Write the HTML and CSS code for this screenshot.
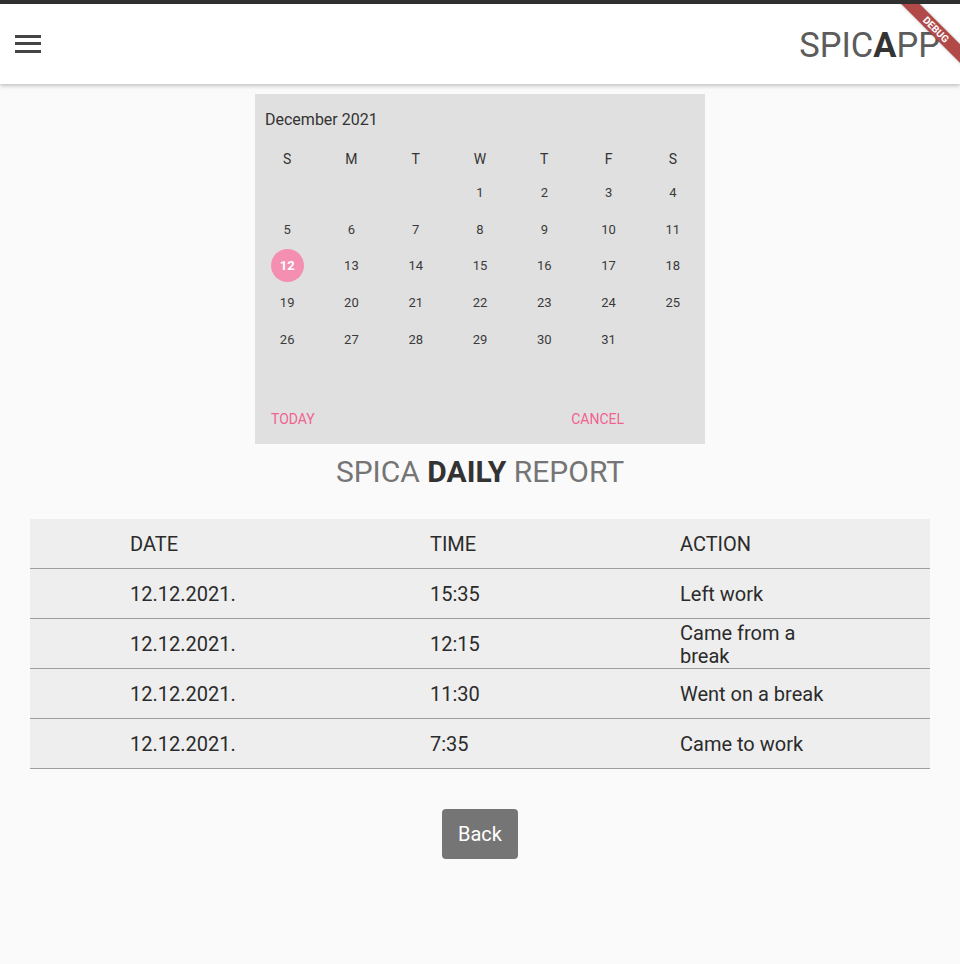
FILE: index.html
```html
<!DOCTYPE html>
<html>
<head>
<meta charset="utf-8">
<link rel="stylesheet" href="styles.css">
</head>
<body>
<div class="status"></div>
<header class="appbar">
  <div class="menu" aria-label="menu">
    <span></span><span></span><span></span>
  </div>
  <div class="brand">SPIC<b>A</b>PP</div>
  <div class="banner-wrap"><div class="banner">DEBUG</div></div>
</header>
<main class="content">
  <section class="calendar">
    <div class="month">December 2021</div>
    <div class="grid weekdays">
      <span>S</span><span>M</span><span>T</span><span>W</span><span>T</span><span>F</span><span>S</span>
    </div>
    <div class="grid days">
      <span></span><span></span><span></span><span>1</span><span>2</span><span>3</span><span>4</span>
      <span>5</span><span>6</span><span>7</span><span>8</span><span>9</span><span>10</span><span>11</span>
      <span class="sel"><i>12</i></span><span>13</span><span>14</span><span>15</span><span>16</span><span>17</span><span>18</span>
      <span>19</span><span>20</span><span>21</span><span>22</span><span>23</span><span>24</span><span>25</span>
      <span>26</span><span>27</span><span>28</span><span>29</span><span>30</span><span>31</span><span></span>
      <span></span><span></span><span></span><span></span><span></span><span></span><span></span>
    </div>
    <div class="cal-actions">
      <span>TODAY</span>
      <span>CANCEL</span>
    </div>
  </section>
  <h1 class="title">SPICA <b>DAILY</b> REPORT</h1>
  <div class="table">
    <div class="row head"><div>DATE</div><div>TIME</div><div class="act">ACTION</div></div>
    <div class="row"><div>12.12.2021.</div><div>15:35</div><div class="act">Left work</div></div>
    <div class="row"><div>12.12.2021.</div><div>12:15</div><div class="act">Came from a break</div></div>
    <div class="row"><div>12.12.2021.</div><div>11:30</div><div class="act">Went on a break</div></div>
    <div class="row"><div>12.12.2021.</div><div>7:35</div><div class="act">Came to work</div></div>
  </div>
  <div class="actions"><button class="back">Back</button></div>
</main>
</body>
</html>
```
FILE: styles.css
```css
* { box-sizing: border-box; }
html, body { margin: 0; padding: 0; }
body {
  background: #fafafa;
  font-family: Roboto, "Liberation Sans", sans-serif;
  color: #333;
  width: 960px;
  height: 964px;
  overflow: hidden;
}
.status { height: 4px; background: #303030; }
.appbar {
  position: relative;
  height: 80px;
  background: #fff;
  display: flex;
  align-items: center;
  justify-content: space-between;
  padding: 0 20px 0 15px;
  box-shadow: 0 2px 4px rgba(0,0,0,0.22);
  z-index: 2;
}
.menu { width: 26px; display: flex; flex-direction: column; gap: 4.5px; margin-top: -1px; }
.menu span { display: block; height: 3px; background: #444; }
.brand {
  font-size: 34.5px;
  color: #5c5c5c;
  font-weight: 400;
  margin-top: 1px;
}
.brand b { color: #333; font-weight: 700; }
.banner-wrap {
  position: absolute;
  top: 0; right: 0;
  width: 80px; height: 80px;
  overflow: hidden;
}
.banner {
  position: absolute;
  left: 6px; top: 19px;
  width: 100px; height: 13px;
  background: #b14949;
  color: #fff;
  font-size: 10px;
  font-weight: 700;
  line-height: 13px;
  text-align: center;
  transform: rotate(45deg);
  box-shadow: 0 0 3px rgba(0,0,0,0.3);
}
.content { padding-top: 10px; display: flex; flex-direction: column; align-items: center; }
.calendar { width: 450px; height: 350px; background: #e0e0e0; }
.month { height: 50px; padding-left: 10px; display: flex; align-items: center; font-size: 16px; color: #333; }
.grid { display: grid; grid-template-columns: repeat(7, 1fr); }
.grid span { display: flex; align-items: center; justify-content: center; }
.weekdays span { height: 30px; font-size: 14px; color: #333; }
.days span { height: 36.7px; font-size: 13px; color: #3a3a3a; }
.days .sel i {
  font-style: normal;
  width: 33px; height: 33px;
  border-radius: 50%;
  background: #f48fb1;
  color: #fff;
  font-weight: 700;
  display: flex; align-items: center; justify-content: center;
}
.cal-actions {
  height: 50px;
  display: flex;
  align-items: center;
  justify-content: space-between;
  padding: 0 81px 0 16px;
  font-size: 14px;
  color: #f06292;
}
.title {
  margin: 12px 0 0;
  height: 32px;
  line-height: 32px;
  font-size: 30px;
  font-weight: 400;
  color: #757575;
}
.title b { color: #333; font-weight: 700; }
.table { width: 900px; margin-top: 31px; background: #eeeeee; }
.row {
  display: grid;
  grid-template-columns: 300px 250px 160px;
  padding-left: 100px;
  padding-top: 2px;
  height: 50px;
  align-items: center;
  border-bottom: 1px solid #9e9e9e;
  font-size: 20px;
  color: #2b2b2b;
}
.row div { line-height: 23px; }
.actions { margin-top: 40px; }
.back {
  width: 76px; height: 50px;
  background: #757575;
  color: #fff;
  border: 0;
  border-radius: 4px;
  font-family: Roboto, "Liberation Sans", sans-serif;
  font-size: 20px;
  padding: 0;
}
```
